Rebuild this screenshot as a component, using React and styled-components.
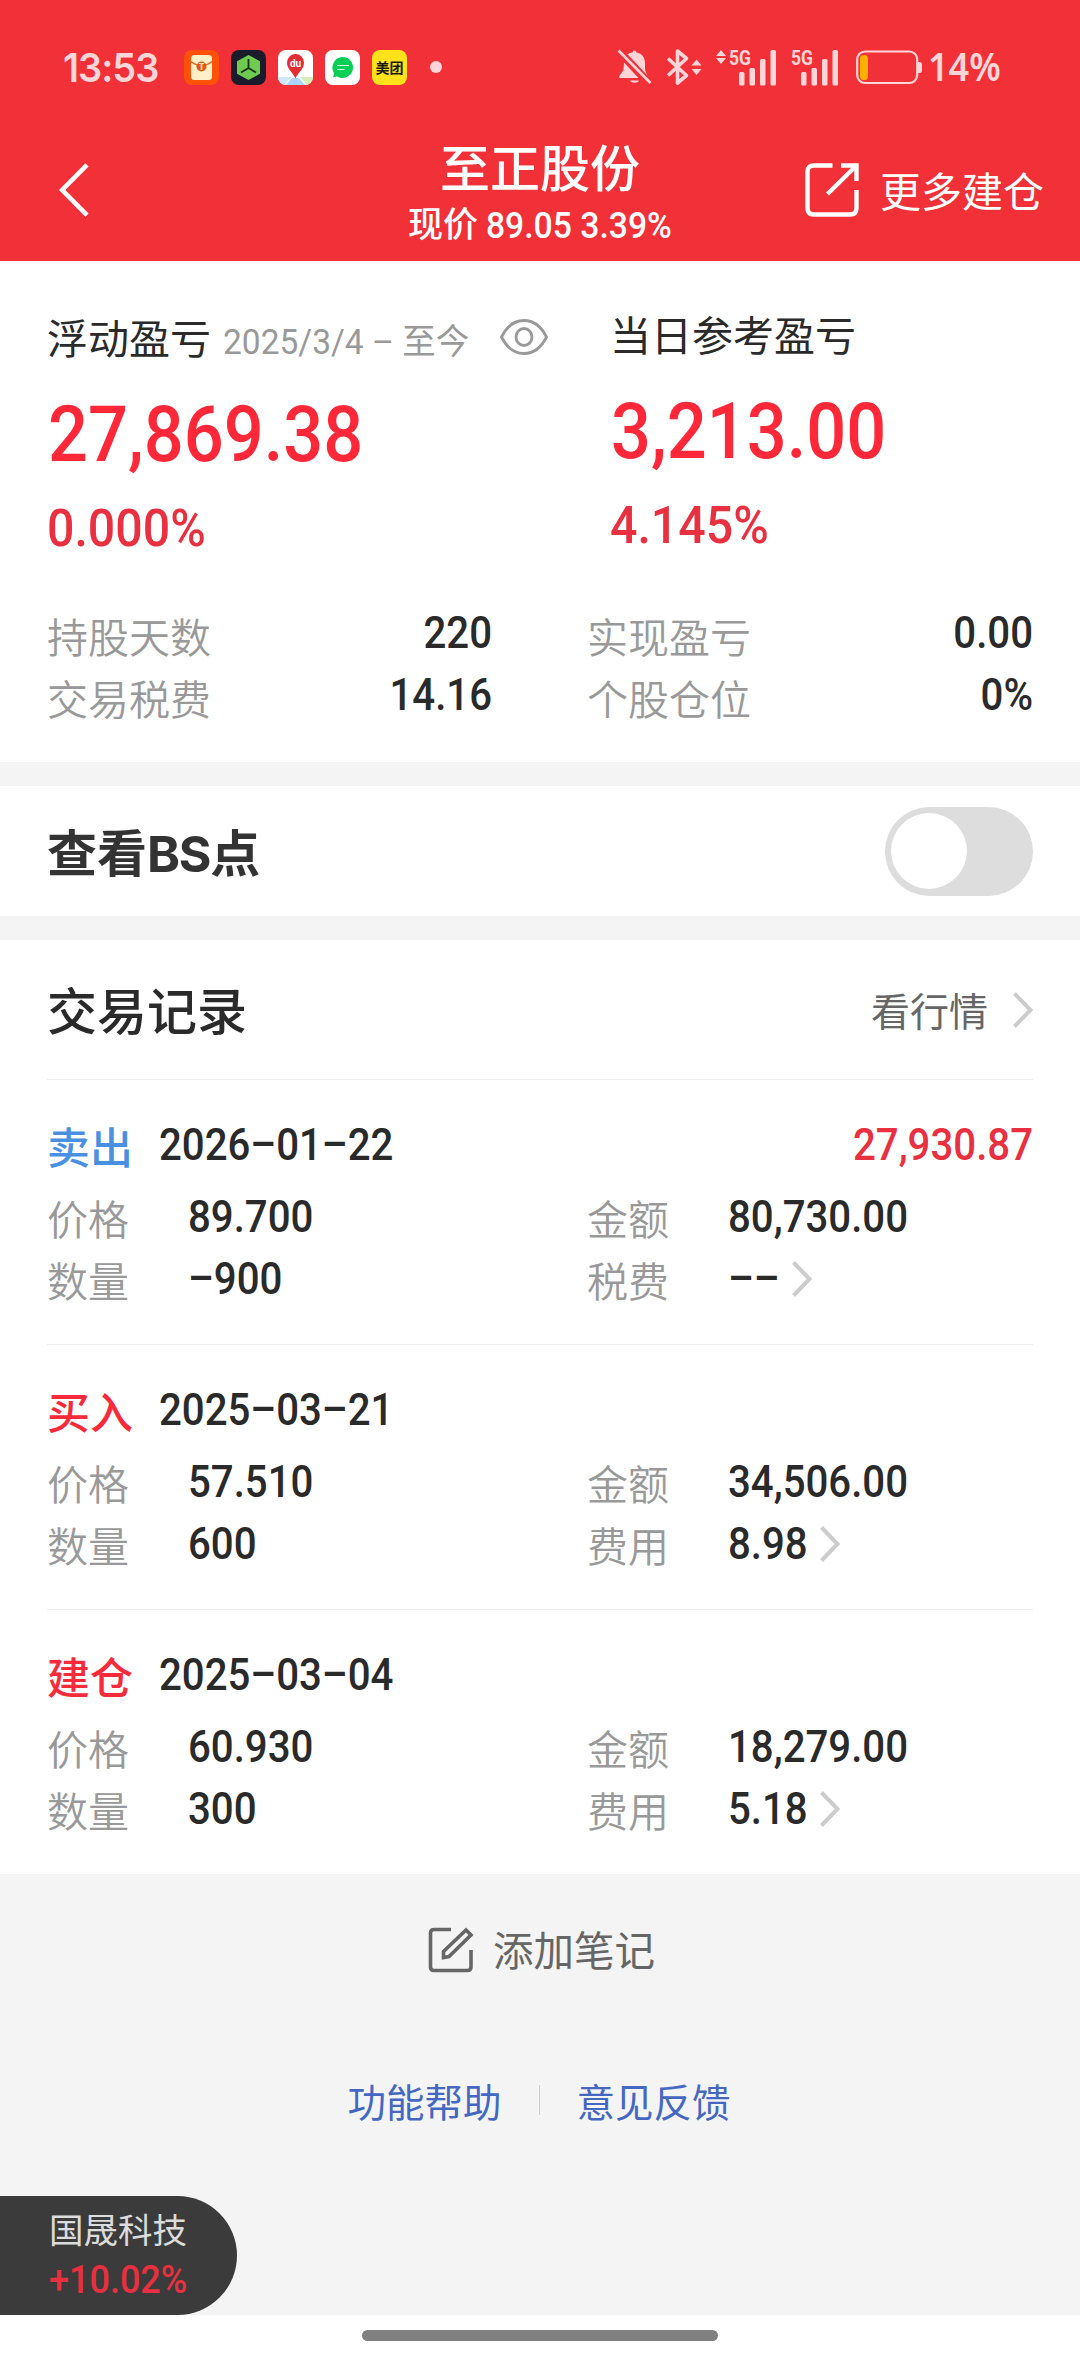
import React, { useState } from "react";
import styled, { createGlobalStyle } from "styled-components";

const han = `"Noto Sans CJK SC", sans-serif`;
const digits = `Roboto, "Noto Sans CJK SC", sans-serif`;

const records = [
  {
    side: "卖出",
    color: "#4a90e2",
    date: "2026–01–22",
    profit: "27,930.87",
    price: "89.700",
    amount: "80,730.00",
    count: "–900",
    feeLabel: "税费",
    fee: "––",
  },
  {
    side: "买入",
    color: "#f92a3a",
    date: "2025–03–21",
    price: "57.510",
    amount: "34,506.00",
    count: "600",
    feeLabel: "费用",
    fee: "8.98",
  },
  {
    side: "建仓",
    color: "#f92a3a",
    date: "2025–03–04",
    price: "60.930",
    amount: "18,279.00",
    count: "300",
    feeLabel: "费用",
    fee: "5.18",
  },
];

const stats = [
  { label: "持股天数", value: "220" },
  { label: "实现盈亏", value: "0.00" },
  { label: "交易税费", value: "14.16" },
  { label: "个股仓位", value: "0%" },
];

const tint = "#ffd5d7";

const AppIcons = () => (
  <>
    <svg width="35" height="35" viewBox="0 0 35 35">
      <rect width="35" height="35" rx="8" fill="#ff5208" />
      <rect x="7" y="5" width="21" height="25" rx="3.500" fill="#fff0c8" />
      <path d="M7 11.500Q17.500 20 28 11.500" fill="none" stroke="#e2611c" strokeWidth="1.300" />
      <circle cx="17.500" cy="16.500" r="5" fill="#dd5a16" />
      <text x="17.500" y="20" fontSize="9" fontWeight="700" textAnchor="middle" fill="#fff0c8" fontFamily="Roboto">T</text>
    </svg>
    <svg width="35" height="35" viewBox="0 0 35 35">
      <rect width="35" height="35" rx="8" fill="#1b1c2b" />
      <path d="M17.500 5 29 11.200v12.600L17.500 30 6 23.800V11.200Z" fill="#6fca50" />
      <path d="M17.500 9v9M17.500 18l-7.500 4.500M17.500 18l7.500 4.500" stroke="#17301c" strokeWidth="1.800" />
    </svg>
    <svg width="35" height="35" viewBox="0 0 35 35">
      <defs>
        <clipPath id="map-tile"><rect width="35" height="35" rx="8" /></clipPath>
      </defs>
      <g clipPath="url(#map-tile)">
        <rect width="35" height="35" fill="#fff" />
        <path d="M0 27h14L6 35H0Z" fill="#cfe7fb" />
        <path d="M14 28h7l6 7H8Z" fill="#a9d5fa" />
        <path d="M22 27h13v8h-6Z" fill="#d3efb4" />
      </g>
      <path d="M17.500 28.500C15.500 23 9 19.500 9 12.500a8.500 8.500 0 0 1 17 0c0 7-6.500 10.500-8.500 16Z" fill="#e42d33" />
      <text x="17.500" y="17" fontSize="10" fontWeight="700" textAnchor="middle" fill="#fff" fontFamily="Roboto">du</text>
    </svg>
    <svg width="35" height="35" viewBox="0 0 35 35">
      <rect width="35" height="35" rx="8" fill="#fff" />
      <path d="M17.500 7a10.500 10.500 0 1 1-5.500 19.400L8.200 27.200l.9-4A10.500 10.500 0 0 1 17.500 7Z" fill="#06cf56" />
      <path d="M12 15.500h12M12 19.500h7.500" stroke="#d8ffe4" strokeWidth="1.200" />
    </svg>
    <svg width="35" height="35" viewBox="0 0 35 35">
      <rect width="35" height="35" rx="8" fill="#ffe21a" />
      <text x="17.500" y="22.800" fontSize="14" fontWeight="700" textAnchor="middle" fill="#1c1a10" fontFamily="Noto Sans CJK SC">美团</text>
    </svg>
  </>
);

const BellOff = () => (
  <svg width="35" height="36" viewBox="0 0 35 36" fill={tint}>
    <path d="M17.500 1.500c1.200 0 1.800.8 1.900 1.900 5.600 1 8.600 5 8.600 10.600v7l2.500 5.500L10.500 5.200C12 4.200 13.500 3.600 15.600 3.400c.1-1.100.7-1.900 1.900-1.900Z" />
    <path d="M7 13.500 21.500 29H2.500L2.300 27 6.500 21Z" />
    <path d="M13 31.500h9c-1 3-8 3-9 0Z" />
    <path d="M1.500 1.500 33.500 34" stroke={tint} strokeWidth="2.600" />
  </svg>
);

const Bluetooth = () => (
  <svg width="36" height="36" viewBox="0 0 36 36" fill="none" stroke={tint}>
    <path d="M2 9.500 20.500 26.500 11.500 34V2L20.500 9.500 2 26.500" strokeWidth="3.600" strokeLinejoin="round" />
    <path d="M30.500 10.500l5 6h-10ZM30.500 26l5-6h-10Z" fill={tint} stroke="none" />
  </svg>
);

const Signal = ({ arrows }) => (
  <svg width={arrows ? 61 : 48} height="37" viewBox={arrows ? "-13 0 61 37" : "0 0 48 37"} fill={tint}>
    {arrows && <path d="M-8 1l5 6h-10ZM-8 15l5-6h-10Z" />}
    <text x="0" y="15.500" fontSize="21" fontWeight="700" fontFamily="Roboto" textLength="22" lengthAdjust="spacingAndGlyphs">5G</text>
    <rect x="10" y="23" width="5.500" height="13.500" rx="1.500" />
    <rect x="20.500" y="19" width="5.500" height="17.500" rx="1.500" />
    <rect x="31" y="10" width="5.500" height="26.500" rx="1.500" />
    <rect x="41.500" y="1" width="5.500" height="35.500" rx="1.500" />
  </svg>
);

const Battery = () => (
  <svg width="66" height="35" viewBox="0 0 66 35">
    <rect x="1.200" y="1.500" width="60" height="31.500" rx="8" fill="none" stroke={tint} strokeWidth="2.200" />
    <path d="M62 12h1.500q2.500 0 2.500 2.500v6q0 2.500-2.500 2.500H62Z" fill={tint} />
    <rect x="4" y="5" width="8" height="25" rx="3.500" fill="#ffb000" />
  </svg>
);

const Chevron = () => (
  <svg width="20" height="36" viewBox="0 0 20 36" fill="none" stroke="#ccc" strokeWidth="4">
    <path d="M1.500 1.500 17.500 18 1.500 34.500" />
  </svg>
);

const BackIcon = () => (
  <svg width="30" height="54" viewBox="0 0 30 54" fill="none" stroke="#fff" strokeWidth="4.600">
    <path d="M28 1.800 3.200 27 28 52.200" />
  </svg>
);

const ShareIcon = () => (
  <svg width="54" height="54" viewBox="0 0 54 54" fill="none" stroke="#fff" strokeWidth="4.400">
    <path d="M27.500 2.500H9Q2.500 2.500 2.500 9V45Q2.500 51.500 9 51.500H45Q51.500 51.500 51.500 45V27" />
    <path d="M36 2.500H51.500V18M51 3 22.500 31" />
  </svg>
);

const EyeIcon = () => (
  <svg width="48" height="36" viewBox="0 0 48 36" fill="none" stroke="#999" strokeWidth="2.800">
    <path d="M1.500 18C7 7 15 1.500 24 1.500S41 7 46.500 18C41 29 33 34.500 24 34.500S7 29 1.500 18Z" />
    <ellipse cx="24" cy="18" rx="8" ry="8.500" />
  </svg>
);

const EditIcon = () => (
  <svg width="46" height="46" viewBox="0 0 46 46" fill="none" stroke="#666" strokeWidth="3.600">
    <path d="M23 2.500H6Q2.500 2.500 2.500 6V40Q2.500 43.500 6 43.500H39.500Q43 43.500 43 40V23" />
    <path d="M15.500 30.500V24.500L38 3 43 8 21 29.500Z" />
  </svg>
);

const App = () => {
  const [showPoints, setShowPoints] = useState(false);

  return (
    <Page>
      <GlobalStyle />
      <Header>
        <StatusBar>
          <Clock>13:53</Clock>
          <Notifications>
            <AppIcons />
          </Notifications>
          <Dot />
          <SystemIcons>
            <BellOff />
            <Bluetooth />
            <Signal arrows />
            <Signal />
          </SystemIcons>
          <Battery />
          <Percent>14%</Percent>
        </StatusBar>
        <NavBar>
          <BackIcon />
          <Heading>
            <h1>至正股份</h1>
            <p>
              现价 <Num $size={33.7}>89.05 3.39%</Num>
            </p>
          </Heading>
          <NavAction>
            <ShareIcon />
            更多建仓
          </NavAction>
        </NavBar>
      </Header>

      <Summary>
        <Totals>
          <Total>
            <TotalTitle>
              浮动盈亏
              <Period>2025/3/4 – 至今</Period>
              <EyeIcon />
            </TotalTitle>
            <TotalValue>27,869.38</TotalValue>
            <TotalRate>0.000%</TotalRate>
          </Total>
          <Total $raised>
            <TotalTitle>当日参考盈亏</TotalTitle>
            <TotalValue>3,213.00</TotalValue>
            <TotalRate>4.145%</TotalRate>
          </Total>
        </Totals>
        <Stats>
          {stats.map((item) => (
            <Stat key={item.label}>
              <Label>{item.label}</Label>
              <Num>{item.value}</Num>
            </Stat>
          ))}
        </Stats>
      </Summary>

      <SwitchRow>
        <h2>
          查看<span>BS</span>点
        </h2>
        <Switch
          role="switch"
          aria-checked={showPoints}
          $on={showPoints}
          onClick={() => setShowPoints(!showPoints)}
        />
      </SwitchRow>

      <Records>
        <RecordsHead>
          <h2>交易记录</h2>
          <QuoteLink>
            看行情
            <Chevron />
          </QuoteLink>
        </RecordsHead>
        {records.map((item) => (
          <Record key={item.date}>
            <RecordTop>
              <Side $color={item.color}>{item.side}</Side>
              <Num>{item.date}</Num>
              {item.profit && <Profit>{item.profit}</Profit>}
            </RecordTop>
            <RecordGrid>
              <Field>
                <Label>价格</Label>
                <Num>{item.price}</Num>
              </Field>
              <Field>
                <Label>金额</Label>
                <Num>{item.amount}</Num>
              </Field>
              <Field>
                <Label>数量</Label>
                <Num>{item.count}</Num>
              </Field>
              <Field>
                <Label>{item.feeLabel}</Label>
                <Num>{item.fee}</Num>
                <Chevron />
              </Field>
            </RecordGrid>
          </Record>
        ))}
      </Records>

      <Footer>
        <AddNote>
          <EditIcon />
          添加笔记
        </AddNote>
        <Links>
          <a>功能帮助</a>
          <LinkDivider />
          <a>意见反馈</a>
        </Links>
        <Ticker>
          <span>国晟科技</span>
          <TickerRate>+10.02%</TickerRate>
        </Ticker>
      </Footer>
      <HomeBar>
        <span />
      </HomeBar>
    </Page>
  );
};

const GlobalStyle = createGlobalStyle`
  * {
    box-sizing: border-box;
  }
  body {
    margin: 0;
    background: #fff;
  }
  h1, h2, p {
    margin: 0;
  }
  svg {
    display: block;
    flex: none;
    overflow: visible;
  }
`;

const Page = styled.main`
  width: 1080px;
  height: 2362px;
  display: flex;
  flex-direction: column;
  font-family: ${han};
  font-size: 41px;
  line-height: 1;
  color: #2a2a2a;
  white-space: nowrap;
  overflow: hidden;
`;

/* Roboto stretched upwards, to get tall narrow figures */
const Num = styled.span`
  display: inline-block;
  font-family: ${digits};
  font-size: ${(props) => props.$size || 40.2}px;
  font-weight: 500;
  transform: scaleY(1.12);
`;

const Header = styled.header`
  height: 261px;
  background: #f13038;
  color: #fff;
`;

const StatusBar = styled.div`
  height: 118px;
  padding: 16px 80px 0 63px;
  display: flex;
  align-items: center;
  color: ${tint};
`;

const Clock = styled.span`
  width: 121px;
  font-family: Inter, sans-serif;
  font-size: 38px;
  font-weight: 600;
  letter-spacing: -1px;
  transform: scaleY(1.06);
`;

const Notifications = styled.div`
  display: flex;
  gap: 12px;
`;

const Dot = styled.i`
  width: 12px;
  height: 12px;
  margin-left: 23px;
  border-radius: 50%;
  background: ${tint};
`;

const SystemIcons = styled.div`
  margin: 0 17px 0 auto;
  display: flex;
  align-items: center;
  gap: 14px;
`;

const Percent = styled.span`
  width: 72px;
  margin-left: 6px;
  font-family: "Noto Sans", sans-serif;
  font-size: 36px;
  font-weight: 600;
  transform: scaleY(1.1);
`;

const NavBar = styled.nav`
  height: 143px;
  padding: 0 36px;
  display: grid;
  grid-template-columns: 238px 1fr 238px;
  align-items: center;
  > svg {
    margin-left: 23px;
  }
`;

const Heading = styled.div`
  padding-top: 8px;
  text-align: center;
  h1 {
    font-size: 50px;
    font-weight: 500;
    line-height: 60px;
  }
  p {
    font-size: 35px;
    font-weight: 500;
    line-height: 54px;
  }
`;

const NavAction = styled.div`
  margin-left: -1px;
  display: flex;
  align-items: center;
  gap: 21px;
`;

const Summary = styled.section`
  height: 501px;
  padding: 45px 47px 0;
`;

const Totals = styled.div`
  display: grid;
  grid-template-columns: 563px 1fr;
`;

const Total = styled.div`
  margin-top: ${(props) => (props.$raised ? -3 : 0)}px;
`;

const TotalTitle = styled.div`
  height: 60px;
  display: flex;
  align-items: center;
  svg {
    margin-top: 1px;
  }
`;

const Period = styled.span`
  margin: 0 31px 0 12px;
  padding-top: 11px;
  font-family: ${digits};
  font-size: 33.500px;
  color: #999;
  transform: scaleY(1.04);
`;

const TotalValue = styled.div`
  margin-top: 29px;
  padding-left: 1px;
  font-family: ${digits};
  font-size: 70.400px;
  font-weight: 500;
  line-height: 80px;
  color: #ff2838;
  transform: scaleY(1.1);
`;

const TotalRate = styled.div`
  margin-top: 29px;
  font-family: ${digits};
  font-size: 48.300px;
  font-weight: 500;
  line-height: 50px;
  color: #e93040;
  transform: scaleY(1.06);
`;

const Stats = styled.div`
  margin-top: 50px;
  display: grid;
  grid-template-columns: 445px 446px;
  column-gap: 95px;
`;

const Stat = styled.div`
  height: 62px;
  display: flex;
  align-items: center;
  justify-content: space-between;
  ${Num} {
    padding-bottom: 1px;
  }
`;

const Label = styled.span`
  color: #999;
  font-weight: 350;
`;

const SwitchRow = styled.section`
  height: 178px;
  padding: 0 47px;
  display: flex;
  align-items: center;
  justify-content: space-between;
  border-top: 24px solid #f4f4f4;
  border-bottom: 24px solid #f4f4f4;
  h2 {
    padding-top: 2px;
    font-size: 50px;
    font-weight: 700;
    color: #333;
  }
  span {
    font-family: Inter, sans-serif;
    font-weight: 700;
    letter-spacing: -1.3px;
  }
`;

const Switch = styled.button`
  width: 148px;
  height: 89px;
  padding: 6px;
  display: flex;
  justify-content: ${(props) => (props.$on ? "flex-end" : "flex-start")};
  border: none;
  border-radius: 45px;
  background: ${(props) => (props.$on ? "#f13038" : "#ddd")};
  &::before {
    content: "";
    width: 76px;
    height: 76px;
    border-radius: 50%;
    background: #fff;
  }
`;

const Records = styled.section`
  height: 934px;
  padding: 0 47px;
`;

const RecordsHead = styled.div`
  height: 139px;
  display: flex;
  align-items: center;
  justify-content: space-between;
  h2 {
    padding-bottom: 3px;
    font-size: 50px;
    font-weight: 500;
  }
`;

const QuoteLink = styled.a`
  display: flex;
  align-items: center;
  gap: 25px;
  font-size: 39px;
  color: #666;
`;

const Record = styled.article`
  height: 265px;
  padding-top: 25px;
  border-top: 1px solid #ebebeb;
`;

const RecordTop = styled.div`
  height: 80px;
  display: flex;
  align-items: center;
`;

const Side = styled.span`
  width: 112px;
  font-size: 43px;
  font-weight: 500;
  color: ${(props) => props.$color};
`;

const Profit = styled(Num)`
  margin-left: auto;
  color: #e93040;
`;

const RecordGrid = styled.div`
  margin-top: 1px;
  display: grid;
  grid-template-columns: 540px 1fr;
`;

const Field = styled.div`
  height: 62px;
  display: flex;
  align-items: center;
  ${Label} {
    width: 141px;
  }
  svg {
    margin-left: 12px;
  }
`;

const Footer = styled.footer`
  height: 441px;
  display: flex;
  flex-direction: column;
  background: #f4f4f5;
`;

const AddNote = styled.div`
  height: 150px;
  padding-left: 3px;
  display: flex;
  align-items: center;
  justify-content: center;
  gap: 19px;
  font-size: 40.500px;
  color: #666;
  svg {
    margin-top: 2px;
  }
`;

const Links = styled.div`
  height: 152px;
  padding-right: 2px;
  display: flex;
  align-items: center;
  justify-content: center;
  gap: 37px;
  font-size: 38.500px;
  color: #4468c2;
`;

const LinkDivider = styled.i`
  width: 1px;
  height: 30px;
  background: #ccc;
`;

const Ticker = styled.div`
  width: 237px;
  height: 119px;
  margin-top: auto;
  padding: 6px 0 0 49px;
  border-radius: 0 60px 60px 0;
  background: #3b3b3b;
  color: #dcdcdc;
  font-size: 34.500px;
  line-height: 52px;
`;

const TickerRate = styled.div`
  font-family: ${digits};
  font-size: 36px;
  font-weight: 500;
  line-height: 52px;
  color: #e93040;
  transform: scaleY(1.06);
`;

const HomeBar = styled.div`
  height: 47px;
  padding-top: 15px;
  display: flex;
  justify-content: center;
  background: #fff;
  span {
    width: 356px;
    height: 11px;
    border-radius: 6px;
    background: #808080;
  }
`;

export default App;
